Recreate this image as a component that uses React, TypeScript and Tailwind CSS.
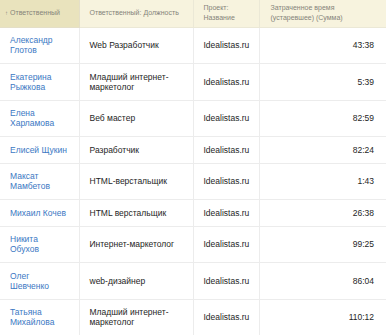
const rows = [
  { name: "Александр Глотов", role: "Web Разработчик", project: "Idealistas.ru", time: "43:38" },
  { name: "Екатерина Рыжкова", role: "Младший интернет-маркетолог", project: "Idealistas.ru", time: "5:39" },
  { name: "Елена Харламова", role: "Веб мастер", project: "Idealistas.ru", time: "82:59" },
  { name: "Елисей Щукин", role: "Разработчик", project: "Idealistas.ru", time: "82:24" },
  { name: "Максат Мамбетов", role: "HTML-верстальщик", project: "Idealistas.ru", time: "1:43" },
  { name: "Михаил Кочев", role: "HTML верстальщик", project: "Idealistas.ru", time: "26:38" },
  { name: "Никита Обухов", role: "Интернет-маркетолог", project: "Idealistas.ru", time: "99:25" },
  { name: "Олег Шевченко", role: "web-дизайнер", project: "Idealistas.ru", time: "86:04" },
  { name: "Татьяна Михайлова", role: "Младший интернет-маркетолог", project: "Idealistas.ru", time: "110:12" },
];

export default function App() {
  return (
    <div className="w-[386px] h-[335px] overflow-hidden bg-white font-['Liberation_Sans',Arial,sans-serif]">
      <table className="w-[386px] table-fixed border-collapse">
        <colgroup>
          <col className="w-[79px]" />
          <col className="w-[114px]" />
          <col className="w-[66px]" />
          <col className="w-[127px]" />
        </colgroup>
        <thead>
          <tr className="h-[27px] text-[7px] leading-[10px] text-[#85837a] text-left align-middle">
            <th className="font-normal bg-[#e9e3bd] border-b border-r border-[#e4dfc8] pl-[5px] pr-1 whitespace-nowrap">
              <span className="text-[6px] mr-[2px]">↑</span>Ответственный
            </th>
            <th className="font-normal bg-[#f7f3de] border-b border-r border-[#ebe8d6] pl-[10px] pr-1 whitespace-nowrap">
              Ответственный: Должность
            </th>
            <th className="font-normal bg-[#f7f3de] border-b border-r border-[#ebe8d6] pl-[10px] pr-1">
              Проект:
              <br />
              Название
            </th>
            <th className="font-normal bg-[#f7f3de] border-b border-[#ebe8d6] pl-[11px] pr-1">
              Затраченное время
              <br />
              (устаревшее) (Сумма)
            </th>
          </tr>
        </thead>
        <tbody className="text-[8.5px] leading-[10px]">
          {rows.map((r) => (
            <tr key={r.name} className="border-b border-[#ececec]">
              <td className="border-r border-[#ececec] pl-[10px] pr-[11px] py-[7.75px] text-[#3b78c3] align-middle">
                {r.name}
              </td>
              <td className="border-r border-[#ececec] pl-[10px] pr-2 py-[7.75px] text-[#1e1e1e] align-middle">
                {r.role}
              </td>
              <td className="border-r border-[#ececec] pl-[10px] pr-1 py-[7.75px] text-[#1e1e1e] align-middle whitespace-nowrap">
                {r.project}
              </td>
              <td className="pr-[12px] py-[7.75px] text-[#1e1e1e] text-right align-middle">
                {r.time}
              </td>
            </tr>
          ))}
        </tbody>
      </table>
    </div>
  );
}
